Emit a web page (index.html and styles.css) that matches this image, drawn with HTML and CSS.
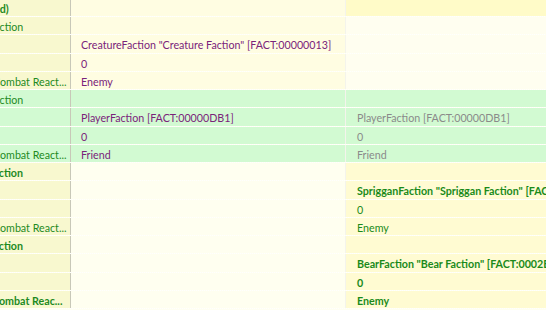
FILE: index.html
```html
<!DOCTYPE html>
<html>
<head>
<meta charset="utf-8">
<link rel="stylesheet" href="styles.css">
</head>
<body>
<div class="grid">
  <div class="row y0"><div class="c1 b"><span class="k k-d">(sorted)</span></div><div class="c2"></div><div class="c3"></div></div>
  <div class="row y"><div class="c1"><span class="k k-c">Faction</span></div><div class="c2"></div><div class="c3"></div></div>
  <div class="row y"><div class="c1"></div><div class="c2">CreatureFaction "Creature Faction" [FACT:00000013]</div><div class="c3"></div></div>
  <div class="row y"><div class="c1"></div><div class="c2">0</div><div class="c3"></div></div>
  <div class="row y"><div class="c1"><span class="k k-o">Combat React...</span></div><div class="c2">Enemy</div><div class="c3"></div></div>

  <div class="row g"><div class="c1"><span class="k k-c">Faction</span></div><div class="c2"></div><div class="c3"></div></div>
  <div class="row g"><div class="c1"></div><div class="c2">PlayerFaction [FACT:00000DB1]</div><div class="c3 gray">PlayerFaction [FACT:00000DB1]</div></div>
  <div class="row g"><div class="c1"></div><div class="c2">0</div><div class="c3 gray">0</div></div>
  <div class="row g"><div class="c1"><span class="k k-o">Combat React...</span></div><div class="c2">Friend</div><div class="c3 gray">Friend</div></div>

  <div class="row n"><div class="c1 b"><span class="k k-cb">Faction</span></div><div class="c2"></div><div class="c3"></div></div>
  <div class="row n"><div class="c1"></div><div class="c2"></div><div class="c3 grn b">SprigganFaction "Spriggan Faction" [FACT:0003A4A3]</div></div>
  <div class="row n"><div class="c1"></div><div class="c2"></div><div class="c3 grn">0</div></div>
  <div class="row n"><div class="c1"><span class="k k-o">Combat React...</span></div><div class="c2"></div><div class="c3 grn">Enemy</div></div>
  <div class="row n"><div class="c1 b"><span class="k k-cb">Faction</span></div><div class="c2"></div><div class="c3"></div></div>
  <div class="row n"><div class="c1"></div><div class="c2"></div><div class="c3 grn b">BearFaction "Bear Faction" [FACT:0002B4A6]</div></div>
  <div class="row n"><div class="c1"></div><div class="c2"></div><div class="c3 grn b">0</div></div>
  <div class="row n"><div class="c1 b"><span class="k k-ob">Combat Reac...</span></div><div class="c2"></div><div class="c3 grn b">Enemy</div></div>
</div>
</body>
</html>
```

FILE: styles.css
```css
html, body {
  margin: 0;
  padding: 0;
  background: #fffff2;
  overflow: hidden;
}
body {
  width: 546px;
  height: 310px;
  font-family: "Lato", "Noto Sans", sans-serif;
  font-size: 10.7px;
}
.grid {
  display: flex;
  flex-direction: column;
  margin-top: -1.25px;
}
.row {
  display: grid;
  grid-template-columns: 71px 275px 1fr;
  height: 18.25px;
  line-height: 20px;
  white-space: nowrap;
  background-image: linear-gradient(to right, rgba(255,255,255,0.9) 50%, transparent 50%);
  background-size: 2px 1px;
  background-repeat: repeat-x;
  background-position: 0 100%;
}
.c1, .c2, .c3 {
  overflow: hidden;
  height: 17.25px;
}
.c1 {
  color: #1e8a1e;
  border-right: 1px solid #c8c8b8;
}
.c2 {
  color: #7a237a;
  padding-left: 10px;
  border-right: 1px solid #f4f4ec;
}
.c3 {
  padding-left: 11px;
}
.k { display: inline-block; }
.k-d { margin-left: -27.5px; }
.k-c { margin-left: -11px; }
.k-cb { margin-left: -12px; }
.k-o { margin-left: -7px; }
.k-ob { margin-left: -8px; }
.b { font-weight: 700; }
.gray { color: #8a8a8a; }
.grn { color: #1a8a1a; }

.y0 .c1 { background: #f8f8cf; }
.y0 .c2 { background: #fffde2; }
.y0 .c3 { background: #fffbc8; }
.y .c1 { background: #f8f8cf; }
.y .c2 { background: #fffde2; }
.y .c3 { background: #fffef0; }
.g .c1, .g .c2, .g .c3 { background: #d2fad2; }
.n .c1 { background: #f8f8cf; }
.n .c2 { background: #fffff0; }
.n .c3 { background: #fffbd2; }
```
